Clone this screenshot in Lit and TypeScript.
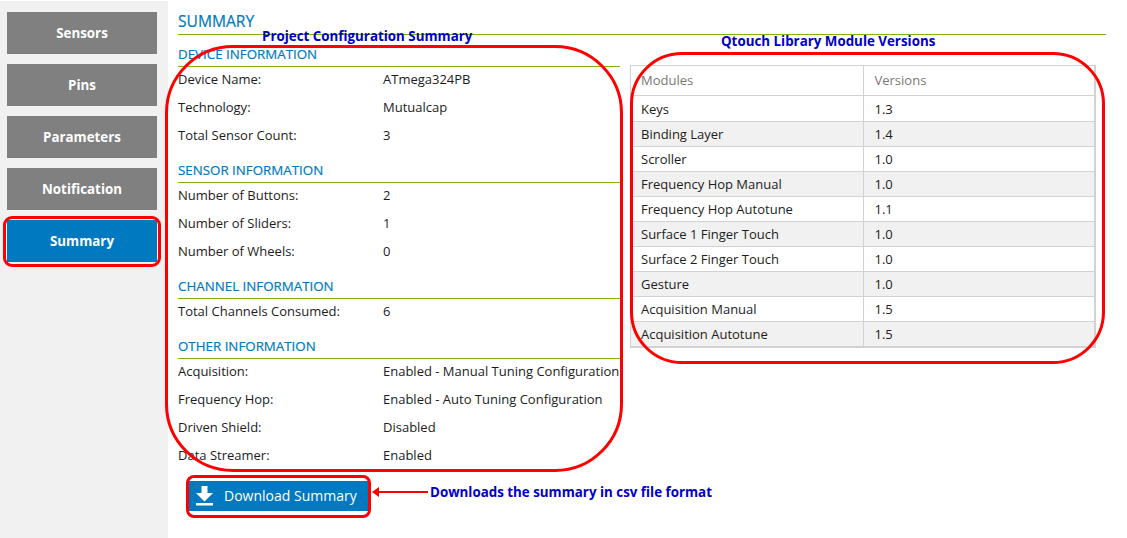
import { LitElement, html, css } from "lit";
import { customElement } from "lit/decorators.js";

const NAV = ["Sensors", "Pins", "Parameters", "Notification", "Summary"];
const SECTIONS: { title: string; rows: [string, string][] }[] = [
  { title: "Device Information", rows: [["Device Name:", "ATmega324PB"], ["Technology:", "Mutualcap"], ["Total Sensor Count:", "3"]] },
  { title: "Sensor Information", rows: [["Number of Buttons:", "2"], ["Number of Sliders:", "1"], ["Number of Wheels:", "0"]] },
  { title: "Channel Information", rows: [["Total Channels Consumed:", "6"]] },
  { title: "Other Information", rows: [["Acquisition:", "Enabled - Manual Tuning Configuration"], ["Frequency Hop:", "Enabled - Auto Tuning Configuration"], ["Driven Shield:", "Disabled"], ["Data Streamer:", "Enabled"]] },
];
const MODULES: [string, string][] = [
  ["Keys", "1.3"], ["Binding Layer", "1.4"], ["Scroller", "1.0"], ["Frequency Hop Manual", "1.0"],
  ["Frequency Hop Autotune", "1.1"], ["Surface 1 Finger Touch", "1.0"], ["Surface 2 Finger Touch", "1.0"],
  ["Gesture", "1.0"], ["Acquisition Manual", "1.5"], ["Acquisition Autotune", "1.5"],
];

@customElement("app-root")
export class AppRoot extends LitElement {
  static styles = css`
    :host { display: block; position: relative; width: 1127px; height: 538px; overflow: hidden; background: #fff; font-family: "Open Sans", sans-serif; color: #1c1c1c; font-size: 13px; }
    .page { display: flex; height: 538px; }
    .side { width: 168px; flex: none; box-sizing: border-box; margin-top: 1px; padding: 11px 11px 0 7px; background: #f1f1f1; display: flex; flex-direction: column; gap: 10px; }
    .nav { height: 42px; box-sizing: border-box; padding-bottom: 1px; display: flex; align-items: center; justify-content: center; background: #808080; color: #fff; font-weight: 700; font-size: 13.33px; }
    .nav.on { background: #0079c1; }
    .main { flex: none; width: 928px; margin-left: 10px; }
    .title { box-sizing: border-box; border-bottom: 1px solid #7ab800; color: #0079c1; font-size: 15.6px; line-height: 24px; padding-top: 9px; margin-bottom: 12px; height: 35px; -webkit-text-stroke: 0.2px #0079c1; }
    .cols { display: flex; gap: 10px; align-items: flex-start; }
    .left { width: 442px; flex: none; display: flex; flex-direction: column; gap: 16px; }
    .head { height: 20px; box-sizing: border-box; border-bottom: 1px solid #7ab800; color: #0079c1; font-size: 13.33px; font-weight: 400; text-transform: uppercase; line-height: 15px; -webkit-text-stroke: 0.2px #0079c1; }
    .rows { display: flex; flex-direction: column; gap: 4px; }
    .row { height: 24px; line-height: 24px; display: flex; white-space: nowrap; }
    .row .k { width: 205px; flex: none; }
    .dl { display: flex; align-items: center; margin: 14px 0 0 11px; width: 179px; height: 30px; background: #0079c1; color: #fff; font-size: 14px; border: 0; padding: 0 0 2px 7px; box-sizing: border-box; font-family: inherit; }
    .dl svg { margin: 2px 11px 0 0; flex: none; }
    .tw { margin-top: 18px; width: 466px; box-sizing: border-box; border: 1px solid #d2d2d2; border-right-width: 2px; border-bottom-width: 2px; }
    table { border-collapse: collapse; width: 100%; table-layout: fixed; }
    th, td { padding: 0 10px; text-align: left; font-weight: 400; height: 25px; box-sizing: border-box; border: 1px solid #d2d2d2; }
    tr > :first-child { border-left: 0; width: 232px; }
    tr > :last-child { border-right: 0; padding-left: 11px; }
    thead tr > * { border-top: 0; height: 29px; color: #777; }
    tbody tr:first-child td { height: 26px; padding-top: 1px; }
    tbody tr:last-child td { border-bottom: 0; }
    tbody tr:nth-child(even) td { background: #f1f1f1; }
    .ring { position: absolute; box-sizing: border-box; border: 3px solid #f00; pointer-events: none; }
    .r1 { left: 165px; top: 45px; width: 458px; height: 427px; border-radius: 68px; }
    .r2 { left: 630px; top: 52px; width: 475px; height: 312px; border-radius: 52px; }
    .r3 { left: 3px; top: 216px; width: 158px; height: 51px; border-radius: 9px; }
    .r4 { left: 186px; top: 475px; width: 185px; height: 43px; border-radius: 8px; }
    .note { position: absolute; color: #0000c8; font-family: "Open Sans", sans-serif; font-weight: 700; font-size: 13.35px; white-space: nowrap; line-height: 16px; }
    .n1 { left: 262px; top: 28px; }
    .n2 { left: 721px; top: 33px; }
    .n3 { left: 430px; top: 484px; }
    .arrow { position: absolute; left: 372px; top: 487px; }
  `;

  render() {
    return html`
      <div class="page">
        <nav class="side">
          ${NAV.map((n) => html`<div class="nav ${n === "Summary" ? "on" : ""}">${n}</div>`)}
        </nav>
        <main class="main">
          <div class="title">SUMMARY</div>
          <div class="cols">
            <div class="left">
              ${SECTIONS.map((s) => html`
                <section>
                  <div class="head">${s.title}</div>
                  <div class="rows">
                    ${s.rows.map(([k, v]) => html`<div class="row"><span class="k">${k}</span><span>${v}</span></div>`)}
                  </div>
                </section>`)}
            </div>
            <div class="tw">
              <table>
                <thead><tr><th>Modules</th><th>Versions</th></tr></thead>
                <tbody>${MODULES.map(([m, v]) => html`<tr><td>${m}</td><td>${v}</td></tr>`)}</tbody>
              </table>
            </div>
          </div>
          <button class="dl">
            <svg width="17" height="20" viewBox="0 0 17 20" fill="#fff">
              <path d="M5.500 0h6v7h5.500L8.500 15.500 0 7h5.500z"/>
              <rect x="0" y="17" width="17" height="2.500"/>
            </svg>
            Download Summary
          </button>
        </main>
      </div>
      <div class="ring r1"></div>
      <div class="ring r2"></div>
      <div class="ring r3"></div>
      <div class="ring r4"></div>
      <div class="note n1">Project Configuration Summary</div>
      <div class="note n2">Qtouch Library Module Versions</div>
      <div class="note n3">Downloads the summary in csv file format</div>
      <svg class="arrow" width="56" height="10" viewBox="0 0 56 10">
        <path d="M0 5 7 0v4h49v2H7v4z" fill="#f00"/>
      </svg>
    `;
  }
}
